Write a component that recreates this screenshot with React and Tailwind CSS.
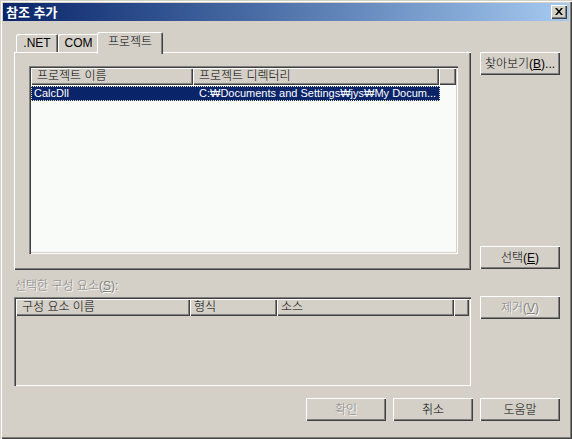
const raised = 'shadow-[inset_1px_1px_#ffffff,inset_-1px_-1px_#404040,inset_-2px_-2px_#808080]';
const sunken = 'shadow-[inset_1px_1px_#808080,inset_2px_2px_#404040,inset_-1px_-1px_#ffffff,inset_-2px_-2px_#d4d0c8]';
const disabledText = 'text-[#808080] [text-shadow:1px_1px_0_#ffffff]';

function Button({ children, disabled }) {
    return (
        <div
            className={`w-[80px] h-[23px] shrink-0 flex items-center justify-center bg-[#d4d0c8] text-[12px] leading-none ${raised} ${disabled ? disabledText : 'text-black'}`}
        >
            {children}
        </div>
    );
}

function HeaderCell({ className, children }) {
    return (
        <div className={`h-[17px] shrink-0 bg-[#d4d0c8] pl-[6px] text-[12px] leading-[17px] text-black whitespace-nowrap overflow-hidden ${raised} ${className}`}>
            {children}
        </div>
    );
}

function Tab({ children, active, className }) {
    return (
        <div
            className={`flex items-center justify-center bg-[#d4d0c8] rounded-t-[2px] text-[12px] leading-none text-black shadow-[inset_1px_1px_#ffffff,inset_-1px_0_#404040,inset_-2px_0_#808080] ${active ? 'h-[22px] -mb-[2px] relative z-10 pb-[2px]' : 'h-[18px]'} ${className}`}
        >
            {children}
        </div>
    );
}

export default function App() {
    return (
        <div className="w-[572px] h-[439px] overflow-hidden bg-[#d4d0c8] p-[3px] flex flex-col font-light font-['Liberation_Sans','Noto_Sans_CJK_KR',sans-serif] shadow-[inset_1px_1px_#d4d0c8,inset_2px_2px_#ffffff,inset_-1px_-1px_#404040,inset_-2px_-2px_#808080]">
            {/* title bar */}
            <div className="h-[18px] shrink-0 flex items-center justify-between pl-[3px] pr-[2px] bg-gradient-to-r from-[#0a246a] to-[#a6caf0]">
                <span className="text-white font-bold text-[13px] leading-none">참조 추가</span>
                <div className={`w-[16px] h-[14px] bg-[#d4d0c8] flex items-center justify-center ${raised}`}>
                    <svg width="8" height="7" viewBox="0 0 8 7" className="-mt-[1px]">
                        <path d="M0 0h2l2 2.5L6 0h2L5 3.5 8 7H6L4 4.5 2 7H0l3-3.5z" fill="#000" />
                    </svg>
                </div>
            </div>

            {/* body */}
            <div className="flex-1 flex flex-col pl-[11px] pr-[9px]">
                <div className="flex gap-[9px]">
                    {/* left column */}
                    <div className="w-[457px] flex flex-col">
                        <div className="mt-[11px] h-[20px] flex items-end pl-[2px]">
                            <Tab className="w-[42px] text-[11px]">.NET</Tab>
                            <Tab className="w-[41px] text-[11px]">COM</Tab>
                            <Tab active className="w-[66px] -ml-[2px]">프로젝트</Tab>
                        </div>
                        <div className={`h-[218px] pt-[14px] pl-[15px] pr-[13px] pb-[16px] ${raised}`}>
                            <div className={`h-full bg-[#f8fbf7] p-[2px] flex flex-col ${sunken}`}>
                                <div className="flex">
                                    <HeaderCell className="w-[162px]">프로젝트 이름</HeaderCell>
                                    <HeaderCell className="w-[246px]">프로젝트 디렉터리</HeaderCell>
                                    <HeaderCell className="flex-1"></HeaderCell>
                                </div>
                                <div className="mt-[1px] w-[409px] h-[15px] flex bg-[#0a246a] text-white text-[11px] leading-[15px] outline-1 outline-dotted outline-[#f2ecc0] -outline-offset-1 whitespace-nowrap overflow-hidden">
                                    <span className="w-[168px] shrink-0 pl-[3px]">CalcDll</span>
                                    <span>C:₩Documents and Settings₩jys₩My Docum...</span>
                                </div>
                            </div>
                        </div>
                        <div className={`h-[27px] pt-[9px] pl-[1px] text-[12px] leading-[15px] ${disabledText}`}>
                            선택한 구성 요소(<u>S</u>):
                        </div>
                        <div className={`h-[89px] bg-[#d4d0c8] p-[2px] ${sunken}`}>
                            <div className="flex">
                                <HeaderCell className="w-[174px]">구성 요소 이름</HeaderCell>
                                <HeaderCell className="w-[87px] !pl-[4px]">형식</HeaderCell>
                                <HeaderCell className="w-[177px] !pl-[4px]">소스</HeaderCell>
                                <HeaderCell className="flex-1"></HeaderCell>
                            </div>
                        </div>
                    </div>

                    {/* right column */}
                    <div className="w-[80px] flex flex-col pt-[31px]">
                        <Button>
                            찾아보기(<u>B</u>)...
                        </Button>
                        <div className="h-[171px]" />
                        <Button>
                            선택(<u>E</u>)
                        </Button>
                        <div className="h-[27px]" />
                        <Button disabled>
                            제거(<u>V</u>)
                        </Button>
                    </div>
                </div>

                <div className="mt-[12px] flex justify-end gap-[7px]">
                    <Button disabled>확인</Button>
                    <Button>취소</Button>
                    <Button>도움말</Button>
                </div>
            </div>
        </div>
    );
}
